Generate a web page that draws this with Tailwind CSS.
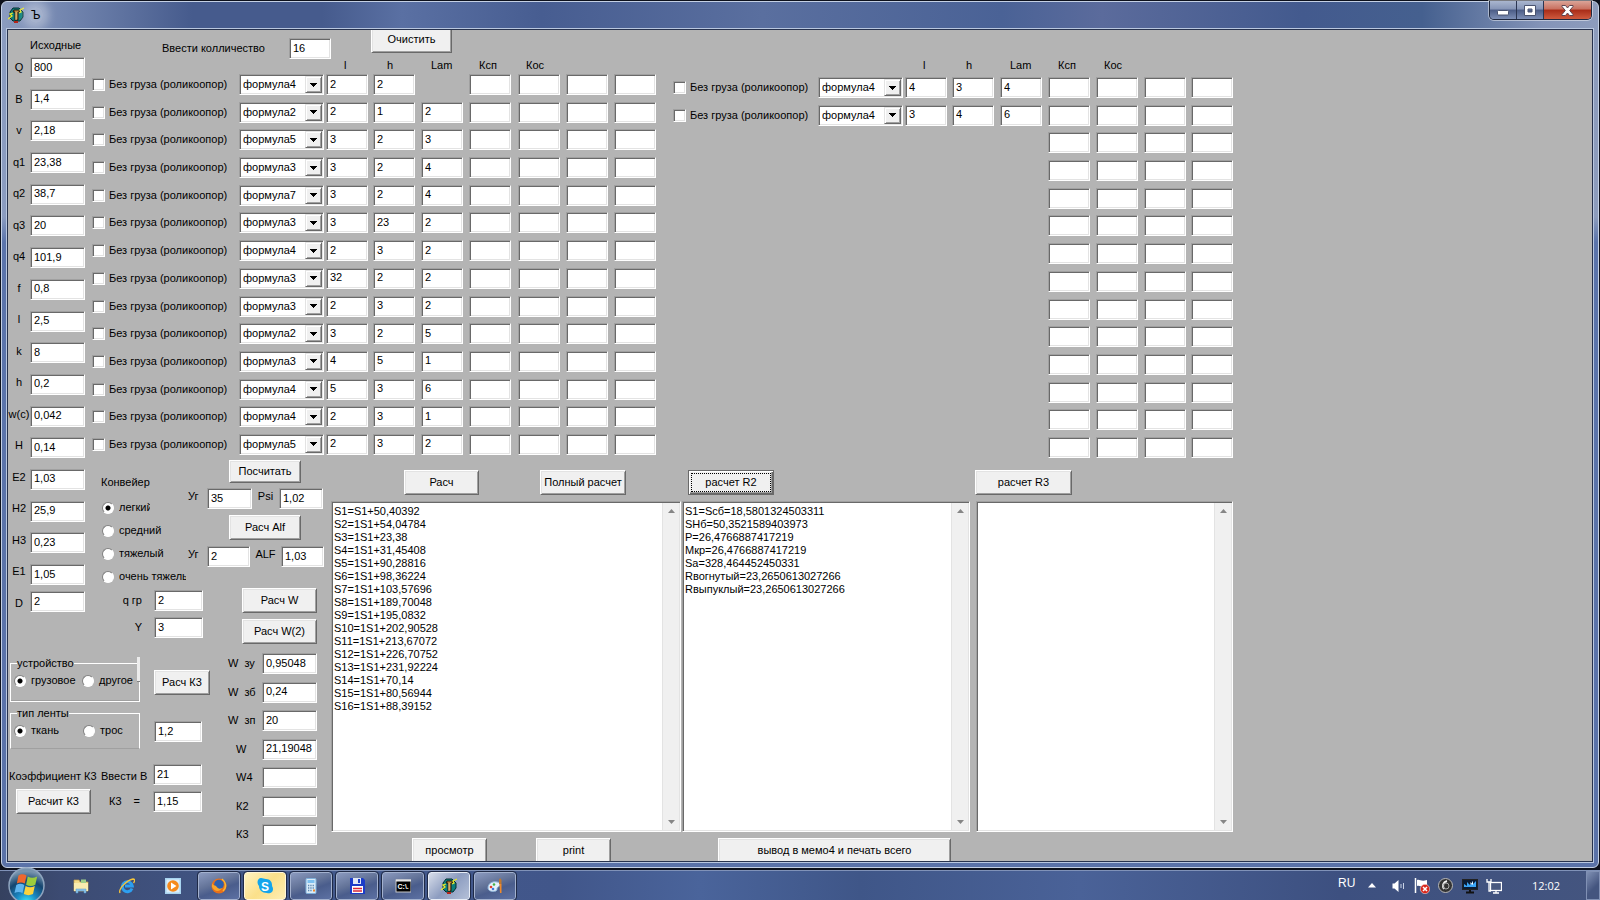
<!DOCTYPE html>
<html lang="ru">
  <head>
    <meta charset="UTF-8" />
    <meta name="viewport" content="width=device-width, initial-scale=1.0" />
    <title>Ъ</title>
    <script src="https://cdn.jsdelivr.net/npm/@tailwindcss/browser@4"></script>
  </head>
  <body class="h-screen flex flex-col overflow-hidden bg-[#0d111c] font-['Liberation_Sans',sans-serif] text-[11px] leading-[13px] text-black">

    <!-- Shared icon of the program (title bar and taskbar) -->
    <svg class="hidden">
      <symbol id="app-icon" viewBox="0 0 16 16">
        <path d="M2 5 5 1h6l4 4v5l-3 4H5L2 11z" fill="#0b7f7c" stroke="#042c2c" />
        <path d="M6 3h5l1 2h-2v8H7V5H5z" fill="#c08a3a" stroke="#20150a" />
        <path d="M8 5v8" stroke="#e9d08a" />
        <path d="M6 14h4v2H6z" fill="#b3231a" />
        <path d="M0 12 4 9l-2-2 3-1M11 6l2-1-1-2 4-2" fill="none" stroke="#e8e82a" stroke-width="1.3" />
      </symbol>
    </svg>

    <!-- Window -->
    <div class="flex-1 min-h-0 mx-px mt-px mb-[2px] flex flex-col rounded-[6px] border border-[#c4d0e4] bg-[linear-gradient(180deg,transparent_215px,#5b74ab_240px,#5a72a8_100%),linear-gradient(90deg,#8b9cc0_0,#7487b0_60px,#465b8d_190px,#465b8d_320px,#5a70a3_400px,#475d91_540px,#5a6f9f_760px,#4a6296_1000px,#5b6b9c_1100px,#435a8e_1300px,#45608f_1420px,#8494b8_1540px,#8d9cbc_100%)]">
      <header class="h-[26px] shrink-0 flex items-start justify-between pl-[6px]">
        <div class="flex items-center gap-[5px] pt-[5px]">
          <svg class="size-4"><use href="#app-icon" /></svg>
          <h1 class="px-[2px] text-[12px] leading-[16px] rounded-full bg-white/30 shadow-[0_0_8px_6px_rgba(255,255,255,0.3)]">Ъ</h1>
        </div>
        <div class="flex h-[19px] mr-[6px] -mt-px rounded-b-[5px] border border-t-0 border-[#20293f] overflow-hidden shadow-[0_0_0_1px_rgba(255,255,255,0.45)]">
          <button aria-label="Свернуть" class="w-[27px] border-r border-[#2b3652] flex justify-center pt-[9px] bg-[linear-gradient(#a9b6cf_0,#8594b6_45%,#4b5c86_50%,#7d8fb6_100%)]">
            <svg class="w-[12px] h-[6px]" viewBox="0 0 12 6"><rect x=".5" y=".5" width="11" height="4.5" rx="1" fill="#fff" stroke="#4a5470" /></svg>
          </button>
          <button aria-label="Развернуть" class="w-[27px] border-r border-[#2b3652] flex justify-center pt-[4px] bg-[linear-gradient(#a9b6cf_0,#8594b6_45%,#4b5c86_50%,#7d8fb6_100%)]">
            <svg class="w-[12px] h-[11px]" viewBox="0 0 12 11"><path d="M.5.5h11v10H.5zM4 4v3h4V4z" fill="#fff" fill-rule="evenodd" stroke="#4a5470" /></svg>
          </button>
          <button aria-label="Закрыть" class="w-[47px] flex justify-center pt-[4px] bg-[linear-gradient(#dba498_0,#c8705f_45%,#a82c18_50%,#cf5a3e_100%)]">
            <svg class="w-[13px] h-[11px]" viewBox="0 0 13 11"><path d="M1 .5h3.500l2 2.500 2-2.500H12v1L8.700 5.500 12 9.500v1H8.500l-2-2.500-2 2.500H1v-1l3.300-4L1 1.500z" fill="#fff" stroke="#5d4450" /></svg>
          </button>
        </div>
      </header>

      <main class="flex-1 min-h-0 mx-[4px] mb-[4px] border border-[#b9c7df] overflow-hidden">
      <div class="h-full border border-[#27324d] bg-[#b4b4b4] overflow-hidden grid grid-cols-[80px_242px_1fr] grid-rows-[auto_auto_minmax(0,1fr)]">

        <!-- Source data -->
        <aside class="row-span-2">
          <h2 class="pl-[22px] pt-[9px] h-[27px] whitespace-nowrap">Исходные</h2>
          <div class="flex">
            <div id="param-labels" class="h-[555px] w-[22px] shrink-0 flex flex-col justify-between items-center pt-[4px] pb-[2px]"></div>
            <div>
              <div id="params" class="h-[528px] flex flex-col justify-between"></div>
              <input id="p17" value="2" class="block mt-[6px] w-[55px] h-[21px] pl-[3px] pb-[2px] bg-white border border-t-[#a0a0a0] border-l-[#a0a0a0] border-r-white border-b-white shadow-[inset_1px_1px_0_#696969,inset_-1px_-1px_0_#e3e3e3]" />
            </div>
          </div>
        </aside>

        <!-- Formula rows -->
        <section class="col-span-2 h-[429px]">
          <div class="flex items-start h-[28px] pl-[74px]">
            <label for="count" class="w-[127px] mt-[12px]">Ввести колличество</label>
            <input id="count" value="16" class="mt-[8px] w-[42px] h-[21px] pl-[3px] pb-[2px] bg-white border border-t-[#a0a0a0] border-l-[#a0a0a0] border-r-white border-b-white shadow-[inset_1px_1px_0_#696969,inset_-1px_-1px_0_#e3e3e3]" />
            <button class="ml-[40px] -mt-[2px] w-[81px] h-[25px] pb-[2px] bg-[#f0f0f0] border border-t-white border-l-white border-r-[#696969] border-b-[#696969] shadow-[inset_1px_1px_0_#e3e3e3,inset_-1px_-1px_0_#a0a0a0]">Очистить</button>
          </div>
          <div class="flex pl-[4px]">
            <div class="w-[581px]">
              <div class="h-[16px] pt-[1px] grid grid-cols-[147px_87px_47px_48px_48px_49px_48px_48px_43px]">
                <span class="col-start-3 pl-[18px]">l</span><span class="pl-[14px]">h</span><span class="pl-[10px]">Lam</span><span class="pl-[10px]">Ксп</span><span class="pl-[8px]">Кос</span>
              </div>
              <div id="rows-left" class="h-[381px] flex flex-col justify-between"></div>
            </div>
            <div>
              <div class="h-[19px] pt-[1px] grid grid-cols-[145px_87px_47px_48px_48px_48px_48px_47px_42px]">
                <span class="col-start-3 pl-[18px]">l</span><span class="pl-[14px]">h</span><span class="pl-[10px]">Lam</span><span class="pl-[10px]">Ксп</span><span class="pl-[8px]">Кос</span>
              </div>
              <div id="rows-right" class="h-[381px] flex flex-col justify-between"></div>
            </div>
          </div>
        </section>

        <!-- Conveyor type and coefficients -->
        <section class="h-[190px]">
          <div class="flex h-[129px]">
            <fieldset class="w-[100px] pl-[14px] pt-[17px]">
              <legend class="sr-only">Конвейер</legend>
              <p class="h-[20px] -ml-px" aria-hidden="true">Конвейер</p>
              <div id="conveyor"></div>
            </fieldset>
            <div class="pt-px flex flex-col items-start">
              <button class="ml-[41px] w-[72px] h-[23px] bg-[#f0f0f0] border border-t-white border-l-white border-r-[#696969] border-b-[#696969] shadow-[inset_1px_1px_0_#e3e3e3,inset_-1px_-1px_0_#a0a0a0]">Посчитать</button>
              <div class="mt-[5px] grid grid-cols-[19px_45px_27px_44px]">
                <label for="ug1" class="pt-[2px]">Уг</label>
                <input id="ug1" value="35" class="w-full h-[21px] pl-[3px] pb-[2px] bg-white border border-t-[#a0a0a0] border-l-[#a0a0a0] border-r-white border-b-white shadow-[inset_1px_1px_0_#696969,inset_-1px_-1px_0_#e3e3e3]" />
                <label for="psi" class="pt-[2px] text-center">Psi</label>
                <input id="psi" value="1,02" class="w-full h-[21px] pl-[3px] pb-[2px] bg-white border border-t-[#a0a0a0] border-l-[#a0a0a0] border-r-white border-b-white shadow-[inset_1px_1px_0_#696969,inset_-1px_-1px_0_#e3e3e3]" />
              </div>
              <button class="mt-[6px] ml-[41px] w-[72px] h-[25px] bg-[#f0f0f0] border border-t-white border-l-white border-r-[#696969] border-b-[#696969] shadow-[inset_1px_1px_0_#e3e3e3,inset_-1px_-1px_0_#a0a0a0]">Расч Alf</button>
              <div class="mt-[6px] grid grid-cols-[19px_43px_31px_43px]">
                <label for="ug2" class="pt-[2px]">Уг</label>
                <input id="ug2" value="2" class="w-full h-[21px] pl-[3px] pb-[2px] bg-white border border-t-[#a0a0a0] border-l-[#a0a0a0] border-r-white border-b-white shadow-[inset_1px_1px_0_#696969,inset_-1px_-1px_0_#e3e3e3]" />
                <label for="alf" class="pt-[2px] text-center">ALF</label>
                <input id="alf" value="1,03" class="w-full h-[21px] pl-[3px] pb-[2px] bg-white border border-t-[#a0a0a0] border-l-[#a0a0a0] border-r-white border-b-white shadow-[inset_1px_1px_0_#696969,inset_-1px_-1px_0_#e3e3e3]" />
              </div>
            </div>
          </div>
          <div class="flex">
            <div class="w-[154px] pt-[2px] grid grid-cols-[66px_49px] gap-y-[6px] items-center content-start text-right">
              <label for="qgr" class="pr-[12px]">q гр</label>
              <input id="qgr" value="2" class="w-full h-[21px] pl-[3px] pb-[2px] bg-white border border-t-[#a0a0a0] border-l-[#a0a0a0] border-r-white border-b-white shadow-[inset_1px_1px_0_#696969,inset_-1px_-1px_0_#e3e3e3]" />
              <label for="yy" class="pr-[12px]">Y</label>
              <input id="yy" value="3" class="w-full h-[21px] pl-[3px] pb-[2px] bg-white border border-t-[#a0a0a0] border-l-[#a0a0a0] border-r-white border-b-white shadow-[inset_1px_1px_0_#696969,inset_-1px_-1px_0_#e3e3e3]" />
            </div>
            <div class="flex flex-col gap-[6px]">
              <button class="w-[75px] h-[25px] bg-[#f0f0f0] border border-t-white border-l-white border-r-[#696969] border-b-[#696969] shadow-[inset_1px_1px_0_#e3e3e3,inset_-1px_-1px_0_#a0a0a0]">Расч W</button>
              <button class="w-[75px] h-[25px] bg-[#f0f0f0] border border-t-white border-l-white border-r-[#696969] border-b-[#696969] shadow-[inset_1px_1px_0_#e3e3e3,inset_-1px_-1px_0_#a0a0a0]">Расч W(2)</button>
            </div>
          </div>
        </section>

        <!-- Results -->
        <section class="row-span-2 flex flex-col min-h-0">
          <div class="h-[42px] pt-[11px] flex items-start">
            <button class="ml-[74px] w-[75px] h-[25px] bg-[#f0f0f0] border border-t-white border-l-white border-r-[#696969] border-b-[#696969] shadow-[inset_1px_1px_0_#e3e3e3,inset_-1px_-1px_0_#a0a0a0]">Расч</button>
            <button class="ml-[61px] w-[86px] h-[25px] bg-[#f0f0f0] border border-t-white border-l-white border-r-[#696969] border-b-[#696969] shadow-[inset_1px_1px_0_#e3e3e3,inset_-1px_-1px_0_#a0a0a0] whitespace-nowrap">Полный расчет</button>
            <button class="ml-[62px] w-[86px] h-[25px] p-[2px] bg-[#f0f0f0] border border-[#696969] shadow-[inset_1px_1px_0_#fff,inset_-1px_-1px_0_#696969,inset_-2px_-2px_0_#a0a0a0]"><span class="flex h-full items-center justify-center border border-dotted border-black">расчет R2</span></button>
            <button class="ml-[201px] w-[97px] h-[25px] bg-[#f0f0f0] border border-t-white border-l-white border-r-[#696969] border-b-[#696969] shadow-[inset_1px_1px_0_#e3e3e3,inset_-1px_-1px_0_#a0a0a0]">расчет R3</button>
          </div>
          <div id="memos" class="flex-1 min-h-0 flex"></div>
          <div class="h-[29px] shrink-0 pt-[6px] flex items-start overflow-hidden">
            <button class="ml-[82px] w-[75px] h-[25px] shrink-0 bg-[#f0f0f0] border border-t-white border-l-white border-r-[#696969] border-b-[#696969] shadow-[inset_1px_1px_0_#e3e3e3,inset_-1px_-1px_0_#a0a0a0]">просмотр</button>
            <button class="ml-[49px] w-[75px] h-[25px] shrink-0 bg-[#f0f0f0] border border-t-white border-l-white border-r-[#696969] border-b-[#696969] shadow-[inset_1px_1px_0_#e3e3e3,inset_-1px_-1px_0_#a0a0a0]">print</button>
            <button class="ml-[107px] w-[233px] h-[25px] shrink-0 bg-[#f0f0f0] border border-t-white border-l-white border-r-[#696969] border-b-[#696969] shadow-[inset_1px_1px_0_#e3e3e3,inset_-1px_-1px_0_#a0a0a0]">вывод в мемо4 и печать всего</button>
          </div>
        </section>

        <!-- Device, belt type and W values -->
        <section class="col-span-2 flex">
          <div class="w-[208px] pt-[8px]">
            <div class="flex items-start h-[50px]">
              <div class="relative">
                <fieldset class="ml-[2px] w-[130px] h-[45px] pl-[3px] border border-white shadow-[inset_0_-1px_0_#a0a0a0]">
                  <legend class="ml-[3px] h-[13px]">устройство</legend>
                  <div class="flex items-center pt-[4px]">
                    <input type="radio" name="device" id="dev1" checked class="appearance-none size-[12px] rounded-full bg-white border border-t-[#808080] border-l-[#808080] border-r-white border-b-white checked:bg-[radial-gradient(circle,#000_2px,#fff_3px)]" />
                    <label for="dev1" class="ml-[5px] w-[51px]">грузовое</label>
                    <input type="radio" name="device" id="dev2" class="appearance-none size-[12px] rounded-full bg-white border border-t-[#808080] border-l-[#808080] border-r-white border-b-white checked:bg-[radial-gradient(circle,#000_2px,#fff_3px)]" />
                    <label for="dev2" class="ml-[5px]">другое</label>
                  </div>
                </fieldset>
                <span class="absolute right-0 top-0 w-[3px] h-[25px] bg-[#ececec] border-b border-[#808080]"></span>
              </div>
              <button class="mt-[13px] ml-[14px] w-[56px] h-[25px] bg-[#f0f0f0] border border-t-white border-l-white border-r-[#696969] border-b-[#696969] shadow-[inset_1px_1px_0_#e3e3e3,inset_-1px_-1px_0_#a0a0a0] whitespace-nowrap">Расч К3</button>
            </div>
            <div class="flex items-start h-[57px]">
              <fieldset class="ml-[2px] w-[130px] h-[42px] pl-[3px] border border-white border-b-[#a0a0a0]">
                <legend class="ml-[3px] h-[13px]">тип ленты</legend>
                <div class="flex items-center pt-[4px]">
                  <input type="radio" name="belt" id="belt1" checked class="appearance-none size-[12px] rounded-full bg-white border border-t-[#808080] border-l-[#808080] border-r-white border-b-white checked:bg-[radial-gradient(circle,#000_2px,#fff_3px)]" />
                  <label for="belt1" class="ml-[5px] w-[52px]">ткань</label>
                  <input type="radio" name="belt" id="belt2" class="appearance-none size-[12px] rounded-full bg-white border border-t-[#808080] border-l-[#808080] border-r-white border-b-white checked:bg-[radial-gradient(circle,#000_2px,#fff_3px)]" />
                  <label for="belt2" class="ml-[5px]">трос</label>
                </div>
              </fieldset>
              <input aria-label="Коэффициент ленты" value="1,2" class="mt-[14px] ml-[14px] w-[48px] h-[21px] pl-[3px] pb-[2px] bg-white border border-t-[#a0a0a0] border-l-[#a0a0a0] border-r-white border-b-white shadow-[inset_1px_1px_0_#696969,inset_-1px_-1px_0_#e3e3e3]" />
            </div>
            <div class="flex items-center h-[21px] pl-px whitespace-nowrap">
              <span class="w-[92px] pt-[4px]">Коэффициент К3</span>
              <label for="inb" class="w-[52px] pt-[4px]">Ввести В</label>
              <input id="inb" value="21" class="w-[49px] h-[21px] pl-[3px] pb-[2px] bg-white border border-t-[#a0a0a0] border-l-[#a0a0a0] border-r-white border-b-white shadow-[inset_1px_1px_0_#696969,inset_-1px_-1px_0_#e3e3e3]" />
            </div>
            <div class="flex items-center mt-[4px] pl-[8px]">
              <button class="w-[75px] h-[25px] bg-[#f0f0f0] border border-t-white border-l-white border-r-[#696969] border-b-[#696969] shadow-[inset_1px_1px_0_#e3e3e3,inset_-1px_-1px_0_#a0a0a0]">Расчит К3</button>
              <label for="k3" class="ml-[18px] w-[44px] flex gap-[12px]"><span>К3</span><span>=</span></label>
              <input id="k3" value="1,15" class="w-[49px] h-[21px] pl-[3px] pb-[2px] bg-white border border-t-[#a0a0a0] border-l-[#a0a0a0] border-r-white border-b-white shadow-[inset_1px_1px_0_#696969,inset_-1px_-1px_0_#e3e3e3]" />
            </div>
          </div>
          <div id="wvalues" class="mt-[4px] h-[192px] flex flex-col justify-between"></div>
        </section>
      </div>
      </main>
    </div>

    <!-- Taskbar -->
    <footer class="h-[30px] shrink-0 flex items-center pl-[8px] border-t border-[#8092b8] bg-[linear-gradient(90deg,#35415f_0,#3c4b72_60px,#43598c_300px,#41568a_560px,#4a649b_700px,#3f5688_860px,#4a6298_1080px,#3d5080_1340px,#44557f_100%)] text-white">
      <button aria-label="Пуск" class="relative w-[37px] h-[37px] shrink-0">
        <svg class="size-full" viewBox="0 0 37 37">
          <defs><radialGradient id="orb" cx=".5" cy="1" r=".9"><stop offset="0" stop-color="#3ff0ff" /><stop offset=".35" stop-color="#1a86c0" /><stop offset=".7" stop-color="#15456f" /><stop offset="1" stop-color="#7793ad" /></radialGradient></defs>
          <circle cx="18.500" cy="18.500" r="17.500" fill="url(#orb)" stroke="#8ea4be" stroke-width="1.500" />
          <path d="M10.500 8.500c3-2 5.500-1.500 8 0l-1.700 8c-2.800-1.500-5-1.500-8 0z" fill="#f0672c" />
          <path d="M19.800 9.500c3 1.800 6 1.800 9.400 0l-1.900 8.200c-2.800 1.600-6.300 1.600-9.200 0z" fill="#9ccc3c" />
          <path d="M8.300 18c3-1.800 5.400-1.500 8 0L14.500 26c-2.700-1.500-5-1.500-8 0z" fill="#5fb4ee" />
          <path d="M17.600 19c2.800 1.700 6.300 1.700 9.200 0l-1.800 8c-2.900 1.600-6.300 1.500-9.200 0z" fill="#fcd23c" />
        </svg>
      </button>
      <div class="ml-[28px] w-[125px] flex gap-[30px]">
        <button aria-label="Проводник" class="size-4"><svg viewBox="0 0 16 16"><path d="M1 2h5l1 2h8v9H1z" fill="#f3dc8c" stroke="#c9a54c" stroke-width=".7" /><path d="M8 1.500h5V5H8z" fill="#9fd08c" /><path d="M1 5h14v8H1z" fill="#f9ecb0" /><path d="M3 15v-4h10v4h-2v-2H5v2z" fill="#8cc4ea" stroke="#5a98c8" stroke-width=".5" /></svg></button>
        <button aria-label="Internet Explorer" class="size-4"><svg viewBox="0 0 16 16"><path d="M13 10.500A5 5 0 1 1 13.300 8H6" fill="none" stroke="#2d9ff0" stroke-width="3" /><path d="M1 15C-1 11 8 2 14 1c2 0 2 2 .5 4" fill="none" stroke="#f5c53a" stroke-width="1.300" /></svg></button>
        <button aria-label="Windows Media" class="size-4"><svg viewBox="0 0 16 16"><rect width="16" height="16" fill="#a8d4f0" /><rect x="1.500" y="1.500" width="13" height="13" fill="#dceefa" /><circle cx="8" cy="8" r="5.800" fill="#f58a1c" /><path d="M6 4.500 11.500 8 6 11.500z" fill="#fff" /></svg></button>
      </div>
      <nav id="tasks" class="flex gap-[4px]"></nav>
      <div class="ml-auto flex items-center h-full">
        <span class="w-[30px] pb-[5px] text-[12px]">RU</span>
        <svg class="w-[8px] h-[5px]" viewBox="0 0 8 5"><path d="M4 0l4 4.500H0z" fill="#fff" /></svg>
        <svg class="ml-[16px] w-[13px] h-[12px]" viewBox="0 0 13 12"><path d="M.5 3.500h2L6.500 0v12l-4-3.500h-2z" fill="#fff" /><path d="M9 4v4M11.500 3v6" stroke="#c8d2e6" /></svg>
        <svg class="ml-[9px] size-4" viewBox="0 0 16 16"><path d="M1.500 0v15" stroke="#fff" stroke-width="1.500" /><path d="M3 2c3-1 4 2 10 0v6c-5 2-7-1-10 0z" fill="#fff" /><circle cx="11" cy="11" r="4.700" fill="#d8281c" stroke="#fff" stroke-width=".5" /><path d="M9 9l4 4m0-4-4 4" stroke="#fff" stroke-width="1.500" /></svg>
        <svg class="ml-[8px] w-[15px] h-[15px]" viewBox="0 0 15 15"><circle cx="7.500" cy="7.500" r="7" fill="#333" stroke="#b8b8b8" /><path d="M9 3C5 4 4 8 6 11" fill="none" stroke="#f4f4f4" stroke-width="2" /><circle cx="8" cy="8" r="3" fill="none" stroke="#aaa" /></svg>
        <svg class="ml-[9px] size-4" viewBox="0 0 16 16"><rect x=".5" y="1.500" width="15" height="10" fill="#0b1b33" stroke="#222" /><path d="M2 9V6l3 2V4l3 3 3-4v3l3-3v6z" fill="#3aa4f4" /><path d="M8 4l1 3 2-4v4z" fill="#fff" /><path d="M4 14.500h8M8 12v2" stroke="#111" stroke-width="2" /></svg>
        <svg class="ml-[8px] size-4" viewBox="0 0 16 16"><rect x="4.500" y="4.500" width="11" height="8" fill="#4a5a80" stroke="#fff" stroke-width="1.300" /><path d="M7 15h6M10 12v3M1 1v3h4V1M3 4v9h2" stroke="#fff" stroke-width="1.300" fill="none" /></svg>
        <time class="ml-[30px] w-[54px] font-['Open_Sans',sans-serif] text-[11px] whitespace-nowrap">12:02</time>
        <button aria-label="Показать рабочий стол" class="w-[14px] h-full border border-[#8090b4] bg-[linear-gradient(135deg,#8090b4,#44557f_60%)]"></button>
      </div>
    </footer>

    <script>
      const boxClass = "bg-white border border-t-[#a0a0a0] border-l-[#a0a0a0] border-r-white border-b-white shadow-[inset_1px_1px_0_#696969,inset_-1px_-1px_0_#e3e3e3]";
      const inputClass = "h-[21px] pl-[3px] pb-[2px] " + boxClass;
      const radioClass = "appearance-none size-[12px] shrink-0 rounded-full bg-white border border-t-[#808080] border-l-[#808080] border-r-white border-b-white checked:bg-[radial-gradient(circle,#000_2px,#fff_3px)]";

      const params = [["Q", "800"], ["B", "1,4"], ["v", "2,18"], ["q1", "23,38"], ["q2", "38,7"], ["q3", "20"], ["q4", "101,9"], ["f", "0,8"], ["l", "2,5"], ["k", "8"], ["h", "0,2"], ["w(c)", "0,042"], ["H", "0,14"], ["E2", "1,03"], ["H2", "25,9"], ["H3", "0,23"], ["E1", "1,05"]];
      document.getElementById("param-labels").innerHTML = [...params, ["D"]].map((p, i) => `<label for="p${i}" class="whitespace-nowrap">${p[0]}</label>`).join("");
      document.getElementById("params").innerHTML = params.map((p, i) => `<input id="p${i}" value="${p[1]}" class="block w-[55px] ${inputClass}">`).join("");

      // formula number, l, h, Lam (null = field is hidden)
      const left = [[4, 2, 2, null], [2, 2, 1, 2], [5, 3, 2, 3], [3, 3, 2, 4], [7, 3, 2, 4], [3, 3, 23, 2], [4, 2, 3, 2], [3, 32, 2, 2], [3, 2, 3, 2], [2, 3, 2, 5], [3, 4, 5, 1], [4, 5, 3, 6], [4, 2, 3, 1], [5, 2, 3, 2]];
      const right = [[4, 4, 3, 4], [4, 3, 4, 6]];
      const names = ["l", "h", "Lam", "Ксп", "Кос", "5", "6"];

      function cells(values) {
        return names.map((name, i) => values[i] === null ? "<span></span>" : `<input aria-label="${name}" value="${values[i] ?? ""}" class="w-[42px] ${inputClass}">`).join("");
      }

      function head(id, formula) {
        return `
          <div class="flex items-center whitespace-nowrap">
            <input type="checkbox" id="${id}" class="appearance-none shrink-0 size-[13px] mr-[4px] ${boxClass}">
            <label for="${id}">Без груза (роликоопор)</label>
          </div>
          <div class="relative w-[85px]">
            <select aria-label="Формула" class="appearance-none block w-full h-[21px] pl-[3px] leading-[17px] ${boxClass}"><option>формула${formula}</option></select>
            <span class="pointer-events-none absolute right-[2px] top-[2px] w-[17px] h-[17px] flex items-center justify-center bg-[#f0f0f0] border border-t-[#e3e3e3] border-l-[#e3e3e3] border-r-[#696969] border-b-[#696969] shadow-[inset_1px_1px_0_#fff,inset_-1px_-1px_0_#a0a0a0]">
              <svg class="w-[7px] h-[4px]" viewBox="0 0 7 4" shape-rendering="crispEdges"><path d="M0 0h7v1H0zM1 1h5v1H1zM2 2h3v1H2zM3 3h1v1H3z" /></svg>
            </span>
          </div>`;
      }

      document.getElementById("rows-left").innerHTML = left.map((r, i) => `
        <div class="h-[21px] grid grid-cols-[147px_87px_47px_48px_48px_49px_48px_48px_43px]">${head("a" + i, r[0])}${cells(r.slice(1))}</div>`).join("");
      document.getElementById("rows-right").innerHTML = left.map((_, i) => {
        const r = right[i];
        return `<div class="h-[21px] grid grid-cols-[145px_87px_47px_48px_48px_48px_48px_47px_42px]">${r ? head("b" + i, r[0]) + cells(r.slice(1)) : "<span></span><span></span>" + cells([null, null, null])}</div>`;
      }).join("");

      document.getElementById("conveyor").innerHTML = ["легкий", "средний", "тяжелый", "очень тяжелый"].map((t, i) => `
        <div class="h-[23px] flex items-center">
          <input type="radio" name="conveyor" id="c${i}" ${i ? "" : "checked"} class="${radioClass}">
          <label for="c${i}" class="ml-[5px] ${i ? "w-[67px]" : "w-[31px]"} overflow-hidden whitespace-nowrap">${t}</label>
        </div>`).join("");

      document.getElementById("wvalues").innerHTML = [["W", "зу", "0,95048"], ["W", "зб", "0,24"], ["W", "зп", "20"], ["W", "", "21,19048"], ["W4", "", ""], ["К2", "", ""], ["К3", "", ""]].map((w, i) => `
        <div class="flex items-center">
          <label for="w${i}" class="w-[46px] ${w[1] ? "pl-[12px]" : "pl-[20px]"} flex gap-[6px]"><span>${w[0]}</span><span>${w[1]}</span></label>
          <input id="w${i}" value="${w[2]}" class="w-[55px] ${inputClass}">
        </div>`).join("");

      const memos = [
        ["w-[350px] ml-px", ["S1=S1+50,40392", "S2=1S1+54,04784", "S3=1S1+23,38", "S4=1S1+31,45408", "S5=1S1+90,28816", "S6=1S1+98,36224", "S7=1S1+103,57696", "S8=1S1+189,70048", "S9=1S1+195,0832", "S10=1S1+202,90528", "S11=1S1+213,67072", "S12=1S1+226,70752", "S13=1S1+231,92224", "S14=1S1+70,14", "S15=1S1+80,56944", "S16=1S1+88,39152"]],
        ["w-[288px] ml-px", ["S1=Scб=18,5801324503311", "SНб=50,3521589403973", "Р=26,4766887417219", "Мкр=26,4766887417219", "Sа=328,464452450331", "Rвогнутый=23,2650613027266", "Rвыпуклый=23,2650613027266"]],
        ["w-[257px] ml-[6px]", []],
      ];
      document.getElementById("memos").innerHTML = memos.map((m, i) => `
        <div class="${m[0]} flex p-px ${boxClass}">
          <textarea aria-label="Результат ${i + 1}" class="flex-1 min-w-0 resize-none overflow-hidden pl-[1px] pt-[2px] leading-[13px]">${m[1].join("\n")}</textarea>
          <div class="w-[17px] flex flex-col items-center justify-between py-[6px] bg-[#f0f0f0] border-l border-[#e3e3e3]">
            <svg class="w-[7px] h-[4px]" viewBox="0 0 7 4"><path d="M3.500 0 7 4H0z" fill="#868686" /></svg>
            <svg class="w-[7px] h-[4px]" viewBox="0 0 7 4"><path d="M0 0h7L3.500 4z" fill="#868686" /></svg>
          </div>
        </div>`).join("");

      const tasks = [
        ["Firefox", `<circle cx="8" cy="8" r="7.500" fill="#e8701a"/><circle cx="8" cy="6.500" r="4.800" fill="#2c5fae"/><path d="M1 5c1 3 3 2 4 3s2 4 6 2c-1 3-7 5-10-1z" fill="#f9a52a"/><path d="M11 1c4 3 5 8 1 12" fill="none" stroke="#f7b733" stroke-width="1.500"/>`],
        ["Skype", `<path d="M4 0c2 0 3 1 5 1 4 0 6 3 6 6 0 2 1 2 1 4 0 4-4 5-6 4-5 0-8-3-8-7C-1 4 1 0 4 0z" fill="#12a5ec"/><text x="8" y="12.500" text-anchor="middle" font-size="12" font-weight="bold" font-family="Liberation Sans" fill="#fff">S</text>`],
        ["Калькулятор", `<rect x="3" y=".5" width="10" height="15" rx="1" fill="#d9ebf8" stroke="#7fb0da"/><rect x="4.500" y="2" width="7" height="3" fill="#7cc0f0"/><path d="M5 7.500h6M5 10h6M5 12.500h4" stroke="#5d87b0" stroke-width="1.300" stroke-dasharray="1.300 1"/><path d="M10 12.500h2" stroke="#f08a2a" stroke-width="2"/>`],
        ["Total Commander", `<path d="M1 0h13l2 2v14H1z" fill="#1c3cc8"/><path d="M4 0h8v6H4z" fill="#dfe6f4"/><path d="M9 1h2v4H9z" fill="#1c3cc8"/><path d="M3 8h11v7H3z" fill="#fff"/><path d="M4 10.500h9M4 13h9" stroke="#d8283a" stroke-width="1.300"/>`],
        ["Командная строка", `<rect x="1" y="2" width="15" height="12" fill="#000" stroke="#c8c8c8"/><path d="M1 2.500h15" stroke="#e8e8e8" stroke-width="2"/><text x="2.500" y="11" font-size="7" font-weight="bold" font-family="Liberation Sans" fill="#fff">C:\\.</text>`],
        ["Ъ", `<use href="#app-icon"/>`],
        ["Paint", `<path d="M1 10c0-5 5-7 9-6 4 0 4 4 1 5-2 1 0 3-2 4-4 1-8 0-8-3z" fill="#e6f1fb" stroke="#8db4da"/><circle cx="4" cy="9" r="1.300" fill="#e04030"/><circle cx="7" cy="6.500" r="1.300" fill="#48b048"/><circle cx="6" cy="11" r="1.300" fill="#3a78e0"/><path d="M13 0l1.500 2v4H12V2z" fill="#c07830"/><path d="M12.500 6h2v9h-1.500z" fill="#f08a2a"/>`],
      ];
      document.getElementById("tasks").innerHTML = tasks.map((t) => {
        const look = t[0] === "Skype" ? "bg-[linear-gradient(135deg,#fff3c0,#fbe08a_50%,#fdeeb4)] border-[#fff6d8]"
          : t[0] === "Ъ" ? "bg-[linear-gradient(135deg,#d8deea,#8c9cc0_50%,#b4c0d8)] border-[#e6ecf6]"
          : "bg-[linear-gradient(160deg,#8b9abf_0,#647499_40%,#4a5d8c_60%,#5d71a3_100%)] border-[#a3b1ce]";
        return `<button aria-label="${t[0]}" class="w-[42px] h-[28px] flex items-center justify-center rounded-[3px] border outline outline-[#1f2a47] ${look}"><svg class="size-4" viewBox="0 0 16 16">${t[1]}</svg></button>`;
      }).join("");
    </script>
  </body>
</html>
